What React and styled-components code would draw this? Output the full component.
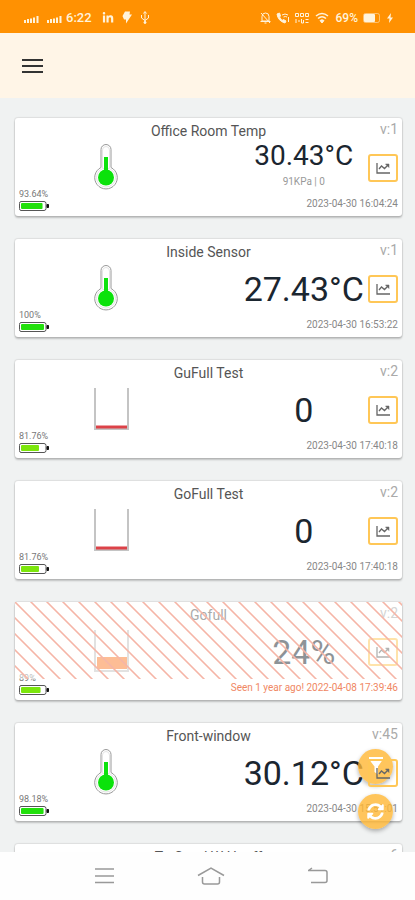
import React from 'react';
import styled, { createGlobalStyle } from 'styled-components';
import { FaLinkedinIn, FaSyncAlt } from 'react-icons/fa';

const GlobalStyle = createGlobalStyle`
  * {
    box-sizing: border-box;
  }

  body {
    margin: 0;
    font-family: Roboto, 'Liberation Sans', sans-serif;
    background-color: #f0f2f2;
  }
`;

const Page = styled.div`
  position: relative;
  display: flex;
  flex-direction: column;
  height: 100vh;
  overflow: hidden;
`;

const StatusBar = styled.div`
  display: flex;
  flex: none;
  align-items: center;
  justify-content: space-between;
  height: 33px;
  padding: 2px 22px 0 24px;
  background-color: #ff9102;
  color: #fff3dc;
`;

const StatusGroup = styled.div`
  display: flex;
  align-items: center;
  gap: ${props => props.$gap};
`;

const Clock = styled.span`
  font-size: 13px;
  font-weight: 500;
  margin: 0 2px 0 -4px;
`;

const BatteryText = styled.span`
  font-size: 12px;
  font-weight: 500;
`;

const Header = styled.header`
  display: flex;
  flex: none;
  align-items: center;
  height: 65px;
  padding: 0 20px;
  background-color: #fff5e7;
`;

const MenuButton = styled.button`
  display: flex;
  padding: 0;
  border: none;
  background: none;
  color: #333;
  cursor: pointer;
`;

const SensorList = styled.main`
  display: flex;
  flex: 1;
  flex-direction: column;
  gap: 23px;
  min-height: 0;
  padding: 20px 13px 0 15px;
  overflow-y: auto;
  scrollbar-width: none;
`;

const Card = styled.article`
  position: relative;
  display: grid;
  flex: none;
  grid-template-columns: 1fr 1fr 30px;
  grid-template-rows: 26px 48px 24px;
  padding: 0 4px;
  border-radius: 3px;
  background-color: #fff;
  box-shadow: 0 0 1px 1px rgba(0, 0, 0, 0.08), 0 2px 2px rgba(0, 0, 0, 0.2);
`;

const Title = styled.h2`
  grid-area: 1 / 1 / 2 / 4;
  margin: 0;
  font-size: 14px;
  font-weight: 400;
  line-height: 26px;
  text-align: center;
  color: #555;
`;

const Version = styled.span`
  grid-area: 1 / 2 / 2 / 4;
  justify-self: end;
  font-size: 14px;
  line-height: 22px;
  color: #aaa;
`;

const Picture = styled.div`
  display: flex;
  grid-area: 2 / 1 / 3 / 2;
  align-items: center;
  justify-content: center;
`;

const Reading = styled.div`
  display: flex;
  grid-area: 2 / 2 / 3 / 3;
  flex-direction: column;
  align-items: center;
  justify-content: center;
  padding-left: 46px;
  white-space: nowrap;
`;

const Value = styled.span`
  font-size: ${props => (props.$small ? '28px' : '34px')};
  line-height: ${props => (props.$small ? '28px' : '48px')};
  color: #1b2630;
`;

const Detail = styled.span`
  font-size: 10px;
  line-height: 24px;
  color: #999;
`;

const ChartButton = styled.button`
  position: relative;
  z-index: 1;
  display: flex;
  grid-area: 2 / 3 / 3 / 4;
  align-items: center;
  align-self: center;
  justify-content: center;
  height: 28px;
  padding: 0;
  border: 2px solid #ffc757;
  border-radius: 3px;
  background: none;
  color: #666;
  cursor: pointer;
`;

const Battery = styled.div`
  display: flex;
  grid-area: 2 / 1 / 4 / 2;
  flex-direction: column;
  align-self: end;
  padding-bottom: 4px;
  font-size: 9px;
  line-height: 12px;
  color: #777;
`;

const Seen = styled.time`
  grid-area: 3 / 1 / 4 / 4;
  justify-self: end;
  font-size: 10px;
  line-height: 24px;
  color: ${props => (props.$stale ? '#f08763' : '#888')};
`;

const Hatch = styled.div`
  position: absolute;
  z-index: 2;
  top: 0;
  right: 0;
  left: 0;
  height: 77px;
  background-color: rgba(255, 255, 253, 0.5);
  background-image: linear-gradient(
    45deg,
    #f5b5a6 2%,
    transparent 5%,
    transparent 45%,
    #f5b5a6 48%,
    #f5b5a6 52%,
    transparent 55%,
    transparent 95%,
    #f5b5a6 98%
  );
  background-size: 16px 16px;
  pointer-events: none;
`;

const Actions = styled.div`
  position: absolute;
  right: 22px;
  bottom: 71px;
  display: flex;
  flex-direction: column;
  gap: 10px;
`;

const ActionButton = styled.button`
  display: flex;
  align-items: center;
  justify-content: center;
  width: 35px;
  height: 35px;
  padding: 0;
  border: none;
  border-radius: 50%;
  background-color: rgba(255, 183, 51, 0.8);
  box-shadow: 0 2px 4px rgba(0, 0, 0, 0.3);
  color: #fff;
  cursor: pointer;
`;

const NavBar = styled.nav`
  display: flex;
  flex: none;
  align-items: center;
  justify-content: space-between;
  height: 48px;
  padding: 0 21% 0 23%;
  background-color: #fefefe;
`;

const NavButton = styled.button`
  display: flex;
  padding: 0;
  border: none;
  background: none;
  color: #999;
  cursor: pointer;
`;

const sensors = [
  { id: 1, name: 'Office Room Temp', version: 1, type: 'temp', value: '30.43°C', detail: '91KPa | 0', battery: 93.64, seen: '2023-04-30 16:04:24' },
  { id: 2, name: 'Inside Sensor', version: 1, type: 'temp', value: '27.43°C', battery: 100, seen: '2023-04-30 16:53:22' },
  { id: 3, name: 'GuFull Test', version: 2, type: 'tank', value: '0', level: 0, battery: 81.76, seen: '2023-04-30 17:40:18' },
  { id: 4, name: 'GoFull Test', version: 2, type: 'tank', value: '0', level: 0, battery: 81.76, seen: '2023-04-30 17:40:18' },
  { id: 5, name: 'Gofull', version: 2, type: 'tank', value: '24%', level: 24, battery: 89, seen: '2022-04-08 17:39:46', stale: 'Seen 1 year ago!' },
  { id: 6, name: 'Front-window', version: 45, type: 'temp', value: '30.12°C', battery: 98.18, seen: '2023-04-30 15:51:01' },
  { id: 7, name: 'To Good W Huoff', version: 6, type: 'temp', value: '29.50°C', battery: 95, seen: '2023-04-30 15:50:12' },
];

function Thermometer() {
  return (
    <svg width="46" height="48" viewBox="0 0 46 48" fill="none">
      <path d="M18 23.500V5.500a5 5 0 0 1 10 0v18a11.300 11.300 0 1 1-10 0z" fill="#fff" stroke="#999" />
      <path d="M19.500 24V6a3.500 3.500 0 0 1 7 0v18" stroke="#e4e4e4" />
      <circle cx="23" cy="33.500" r="9.500" stroke="#e4e4e4" />
      <circle cx="23" cy="33.500" r="8" fill="#0be20b" />
      <path d="M23 34V13" stroke="#0be20b" strokeWidth="4" />
    </svg>
  );
}

function Tank({ level }) {
  const height = level * 0.5;
  return (
    <svg width="46" height="48" viewBox="0 0 46 48" fill="none">
      <path d="M12 2v41h33V2" stroke="#c4c4c4" strokeWidth="2" />
      {level > 0 ? (
        <rect x="14" y={41 - height} width="30" height={height} fill="#fb7a2c" />
      ) : (
        <path d="M13 41h31" stroke="#dc4248" strokeWidth="3" />
      )}
    </svg>
  );
}

function BatteryIcon({ percent }) {
  const color = percent > 90 ? '#22e00c' : '#7ce60c';
  const width = percent > 90 ? percent * 0.23 : percent * 0.22;
  return (
    <svg width="30" height="12" viewBox="0 0 30 12" fill="none">
      <path d="M2 1.500h23q2 0 2 2v5q0 2-2 2H2q-1.500 0-1.500-2v-5q0-2 1.500-2z" stroke="#555" />
      <path d="M28 4.500v3h1.500v-3z" fill="#111" stroke="#111" />
      <rect x="2" y="3" width={width} height="6" rx="1" fill={color} />
    </svg>
  );
}

function ChartIcon() {
  return (
    <svg width="16" height="14" viewBox="0 0 16 14" fill="none" stroke="currentColor">
      <path d="M2 2v10h13" strokeWidth="1.300" />
      <path d="M4 8l2.500-3 3 2.500L13 4" strokeWidth="1.300" />
      <path d="M10.500 3h3.500v3.500z" fill="currentColor" strokeWidth="0.500" />
    </svg>
  );
}

function SignalIcon() {
  return (
    <svg width="15" height="10" viewBox="0 0 15 10" fill="currentColor">
      <path d="M0 7h2v3H0zM3 6h2v4H3zM6 5.500h2V10H6zM9 4.500h2V10H9zM12.500 3h2v7h-2z" />
    </svg>
  );
}

function SensorCard({ sensor }) {
  return (
    <Card>
      <Title>{sensor.name}</Title>
      <Version>v:{sensor.version}</Version>
      <Picture>
        {sensor.type === 'temp' ? <Thermometer /> : <Tank level={sensor.level} />}
      </Picture>
      <Reading>
        <Value $small={!!sensor.detail}>{sensor.value}</Value>
        {sensor.detail && <Detail>{sensor.detail}</Detail>}
      </Reading>
      <ChartButton aria-label={`${sensor.name} chart`}>
        <ChartIcon />
      </ChartButton>
      <Battery>
        {sensor.battery}%
        <BatteryIcon percent={sensor.battery} />
      </Battery>
      <Seen $stale={!!sensor.stale}>
        {sensor.stale} {sensor.seen}
      </Seen>
      {sensor.stale && <Hatch />}
    </Card>
  );
}

function App() {
  return (
    <Page>
      <GlobalStyle />
      <StatusBar>
        <StatusGroup $gap="8px">
          <SignalIcon />
          <SignalIcon />
          <Clock>6:22</Clock>
          <FaLinkedinIn size={12} />
          <svg width="10" height="13" viewBox="0 0 10 13" fill="currentColor">
            <path d="M3 0.500h5l-0.500 3H10L4 12.500V8.500H2L0.500 5z" />
          </svg>
          <svg width="10" height="13" viewBox="0 0 10 13" fill="none" stroke="currentColor">
            <path d="M5 1v11M1.500 4v3L5 9.500 8.500 7V4M3.500 2.500L5 0.500l1.500 2" />
            <circle cx="5" cy="11.500" r="1" fill="currentColor" />
          </svg>
        </StatusGroup>
        <StatusGroup $gap="5px">
          {/* muted bell */}
          <svg width="11" height="12" viewBox="0 0 11 12" fill="none" stroke="currentColor">
            <path d="M2 9V4.500a3.500 3.500 0 0 1 7 0V9zM0.500 9.500h10M4.500 11h2M1 1l9 10" />
          </svg>
          {/* call over wifi */}
          <svg width="14" height="12" viewBox="0 0 14 12" fill="none" stroke="currentColor">
            <path d="M1 2q1 7 8 9l1-2-2.500-1.500L6 8.500 3.500 5l1-1L3.500 1z" fill="currentColor" />
            <path d="M6 3q3-2 6 0M7.500 5q2-1 3.500 0M12.500 5v5" />
          </svg>
          {/* network speed */}
          <svg width="14" height="12" viewBox="0 0 14 12" fill="none" stroke="currentColor">
            <path d="M0.500 1.500h3v3h-3zM5.500 1.500h3v3h-3zM10.500 1.500h3v3h-3zM1 7v4M3 9h2M6.500 7v4h2V8M10.500 7.500h3M10.500 10.500h3" />
          </svg>
          <svg width="17" height="12" viewBox="0 0 15 12" fill="none" stroke="currentColor" strokeWidth="1.600">
            <path d="M1 4q6-5 12 0M3 6.500q4-3.500 8 0" />
            <path d="M5 8.500q2-1.500 4 0L7 11z" fill="currentColor" strokeWidth="1" />
          </svg>
          <BatteryText>69%</BatteryText>
          <svg width="19" height="10" viewBox="0 0 19 10" fill="none">
            <rect x="0.500" y="0.500" width="16" height="9" rx="2" stroke="currentColor" strokeOpacity="0.5" />
            <rect x="1" y="1" width="11" height="8" rx="1" fill="currentColor" />
          </svg>
          <svg width="6" height="10" viewBox="0 0 6 10" fill="currentColor">
            <path d="M4 0L0 5.500h2.500L2 10l4-5.500H3.500z" />
          </svg>
        </StatusGroup>
      </StatusBar>
      <Header>
        <MenuButton aria-label="Menu">
          <svg width="25" height="18" viewBox="0 0 25 18" stroke="currentColor" strokeWidth="2">
            <path d="M2 3h21M2 9h21M2 15h21" />
          </svg>
        </MenuButton>
      </Header>
      <SensorList>
        {sensors.map(sensor => (
          <SensorCard key={sensor.id} sensor={sensor} />
        ))}
      </SensorList>
      <Actions>
        <ActionButton aria-label="Filter">
          <svg width="16" height="22" viewBox="0 0 16 22" fill="currentColor">
            <path d="M1 1h14v2H1zM1.500 4h13L10 10.500v8l-3.500-2.500v-5.500z" />
          </svg>
        </ActionButton>
        <ActionButton aria-label="Refresh">
          <FaSyncAlt size={17} />
        </ActionButton>
      </Actions>
      <NavBar>
        <NavButton aria-label="Recent apps">
          <svg width="19" height="18" viewBox="0 0 19 18" stroke="currentColor" strokeWidth="1.500">
            <path d="M0 2h19M0 9h19M0 15.500h19" />
          </svg>
        </NavButton>
        <NavButton aria-label="Home">
          <svg width="28" height="20" viewBox="0 0 28 20" fill="none" stroke="currentColor" strokeWidth="1.500">
            <path d="M1 9.500L14 2l13 7.500M5.500 11v5q0 2 2 2h13q2 0 2-2v-5" />
          </svg>
        </NavButton>
        <NavButton aria-label="Back">
          <svg width="21" height="18" viewBox="0 0 21 18" fill="none" stroke="currentColor" strokeWidth="1.500">
            <path d="M1 3.500h17q2 0 2 2v8q0 2-2 2H4M5 1L1.500 3.500" />
          </svg>
        </NavButton>
      </NavBar>
    </Page>
  );
}

export default App;
